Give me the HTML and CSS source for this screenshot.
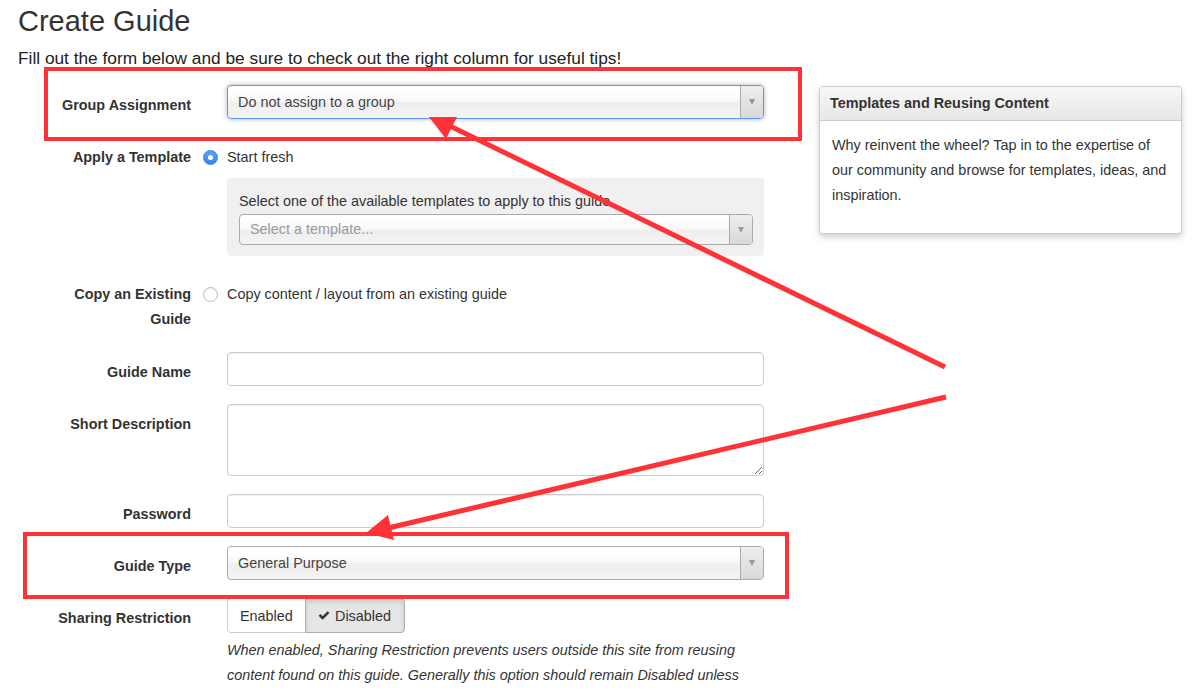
FILE: index.html
```html
<!DOCTYPE html>
<html lang="en">

<head>
    <meta charset="UTF-8" />
    <meta name="viewport" content="width=device-width, initial-scale=1.0" />
    <title>Create Guide</title>
    <link rel="stylesheet" href="styles.css">
</head>

<body>
    <div class="page">
        <h1 class="title">Create Guide</h1>
        <p class="intro">Fill out the form below and be sure to check out the right column for useful tips!</p>

        <div class="layout">
            <form action="#" class="guide-form">
                <div class="row">
                    <label class="row-label">Group Assignment</label>
                    <div class="row-field">
                        <div class="select focused">
                            <span class="select-text">Do not assign to a group</span>
                            <b class="select-arrow"></b>
                        </div>
                    </div>
                </div>

                <div class="row">
                    <label class="row-label">Apply a Template</label>
                    <div class="row-field">
                        <div class="radio-option">
                            <span class="radio checked"></span>
                            <span>Start fresh</span>
                        </div>
                        <div class="well">
                            <p class="well-label">Select one of the available templates to apply to this guide</p>
                            <div class="select small">
                                <span class="select-text placeholder">Select a template...</span>
                                <b class="select-arrow"></b>
                            </div>
                        </div>
                    </div>
                </div>

                <div class="row row-wide">
                    <label class="row-label">Copy an Existing Guide</label>
                    <div class="row-field">
                        <div class="radio-option">
                            <span class="radio"></span>
                            <span>Copy content / layout from an existing guide</span>
                        </div>
                    </div>
                </div>

                <div class="row">
                    <label class="row-label">Guide Name</label>
                    <div class="row-field">
                        <input type="text" class="text-input" />
                    </div>
                </div>

                <div class="row">
                    <label class="row-label">Short Description</label>
                    <div class="row-field">
                        <textarea class="text-area"></textarea>
                    </div>
                </div>

                <div class="row">
                    <label class="row-label">Password</label>
                    <div class="row-field">
                        <input type="password" class="text-input" />
                    </div>
                </div>

                <div class="row">
                    <label class="row-label">Guide Type</label>
                    <div class="row-field">
                        <div class="select">
                            <span class="select-text">General Purpose</span>
                            <b class="select-arrow"></b>
                        </div>
                    </div>
                </div>

                <div class="row">
                    <label class="row-label">Sharing Restriction</label>
                    <div class="row-field">
                        <div class="btn-group">
                            <button type="button" class="btn">Enabled</button>
                            <button type="button" class="btn active">
                                <svg class="check" width="12" height="11" viewBox="0 0 12 11">
                                    <path d="M0.6 5.8 L2.4 4 L4.6 6.2 L9.6 1.2 L11.4 3 L4.6 9.8 Z" fill="#333" />
                                </svg>
                                Disabled
                            </button>
                        </div>
                        <p class="help">When enabled, Sharing Restriction prevents users outside this site from reusing content found on this guide. Generally this option should remain Disabled unless</p>
                    </div>
                </div>
            </form>

            <aside class="tips">
                <div class="tips-head">Templates and Reusing Content</div>
                <div class="tips-body">Why reinvent the wheel? Tap in to the expertise of our community and browse for templates, ideas, and inspiration.</div>
            </aside>
        </div>
    </div>

    <!-- red annotation marks drawn over the screenshot -->
    <svg class="marks" width="1199" height="691" viewBox="0 0 1199 691">
        <rect x="46" y="69" width="754" height="70" fill="none" stroke="#fe3237" stroke-width="4" />
        <rect x="25" y="534" width="762" height="63" fill="none" stroke="#fe3237" stroke-width="4" />
        <line x1="945" y1="367" x2="450" y2="126" stroke="#fe3237" stroke-width="5" />
        <polygon points="429,117 457,117 446,139" fill="#fe3237" />
        <line x1="946" y1="397" x2="388" y2="528" stroke="#fe3237" stroke-width="5" />
        <polygon points="366,533 388,515 394,540" fill="#fe3237" />
    </svg>
</body>

</html>
```

FILE: styles.css
```css
* {
    margin: 0;
    padding: 0;
    box-sizing: border-box;
    font-family: "Liberation Sans", Arial, sans-serif;
}

body {
    background: #fff;
    color: #333;
    font-size: 14.4px;
    line-height: 25px;
    overflow: hidden;
}

.page {
    padding: 3px 0 0 18px;
}

.title {
    font-size: 29px;
    font-weight: normal;
    line-height: 36px;
    color: #333;
}

.intro {
    margin-top: 8px;
    font-size: 17.3px;
    line-height: 22px;
    color: #222;
}

.layout {
    display: flex;
    align-items: flex-start;
    margin-top: 16px;
}

.guide-form {
    width: 746px;
    padding-left: 23px;
}

.row {
    display: grid;
    grid-template-columns: 150px 537px;
    column-gap: 36px;
    margin-bottom: 18px;
}

.row-wide {
    margin-bottom: 20px;
}

.row-label {
    text-align: right;
    font-weight: bold;
    padding-top: 8px;
    line-height: 25px;
}

/* fake chosen select */
.select {
    height: 34px;
    border: 1px solid #aaa;
    border-radius: 4px;
    background: linear-gradient(#ffffff 20%, #f6f6f6 50%, #eeeeee 52%, #f4f4f4 100%);
    display: flex;
    align-items: center;
    color: #444;
}

.select.focused {
    border-color: #5897fb;
    box-shadow: 0 0 5px rgba(0, 0, 0, 0.3);
}

.select.small {
    height: 31px;
}

.select-text {
    flex: 1;
    padding-left: 10px;
}

.select-text.placeholder {
    color: #999;
}

.select-arrow {
    width: 23px;
    align-self: stretch;
    border-left: 1px solid #aaa;
    background: linear-gradient(#eeeeee, #d8d8d8);
    border-radius: 0 3px 3px 0;
    display: flex;
    align-items: center;
    justify-content: center;
}

.select-arrow::after {
    content: "";
    border-left: 3.5px solid transparent;
    border-right: 3.5px solid transparent;
    border-top: 6px solid #999;
}

.radio-option {
    display: flex;
    align-items: center;
    gap: 9px;
    margin-left: -24px;
    padding-top: 8px;
    line-height: 25px;
}

.radio {
    width: 15px;
    height: 15px;
    border-radius: 50%;
    border: 1px solid #bbb;
    background: #fff;
    box-shadow: inset 0 1px 1px rgba(0, 0, 0, 0.08);
    display: flex;
    align-items: center;
    justify-content: center;
}

.radio.checked {
    border-color: #2d87f5;
    background: linear-gradient(#5aa7fb, #2f86f3);
}

.radio.checked::after {
    content: "";
    width: 5px;
    height: 5px;
    border-radius: 50%;
    background: #fff;
}

.well {
    margin-top: 8px;
    background: #f0f0f0;
    border-radius: 4px;
    padding: 11px 11px 11px 12px;
}

.well-label {
    line-height: 25px;
}

.text-input,
.text-area {
    display: block;
    width: 100%;
    height: 34px;
    border: 1px solid #ccc;
    border-radius: 4px;
    box-shadow: inset 0 1px 1px rgba(0, 0, 0, 0.075);
    font-size: 14px;
    padding: 6px 10px;
}

.text-area {
    height: 72px;
    resize: vertical;
}

.btn-group {
    display: flex;
}

.btn {
    height: 35px;
    padding: 0 12px;
    border: 1px solid #ccc;
    background: #fff;
    color: #333;
    font-size: 14.4px;
    display: flex;
    align-items: center;
    gap: 5px;
}

.btn:first-child {
    width: 79px;
    border-radius: 4px 0 0 4px;
}

.btn:last-child {
    width: 100px;
    margin-left: -1px;
    border-radius: 0 4px 4px 0;
}

.btn.active {
    background: #e6e6e6;
    border-color: #adadad;
    box-shadow: inset 0 3px 5px rgba(0, 0, 0, 0.125);
}

.help {
    margin-top: 5px;
    font-style: italic;
    line-height: 25px;
    color: #333;
}

.tips {
    width: 363px;
    margin-left: 55px;
    margin-top: 1px;
    border: 1px solid #ccc;
    border-radius: 4px;
    box-shadow: 0 3px 6px rgba(0, 0, 0, 0.2);
}

.tips-head {
    height: 34px;
    line-height: 33px;
    padding: 0 10px;
    font-weight: bold;
    border-bottom: 1px solid #ccc;
    border-radius: 4px 4px 0 0;
    background: linear-gradient(#f8f8f8, #e6e6e6);
}

.tips-body {
    padding: 12px 12px 25px 12px;
    line-height: 25px;
}

.marks {
    position: absolute;
    top: 0;
    left: 0;
    pointer-events: none;
}
```
